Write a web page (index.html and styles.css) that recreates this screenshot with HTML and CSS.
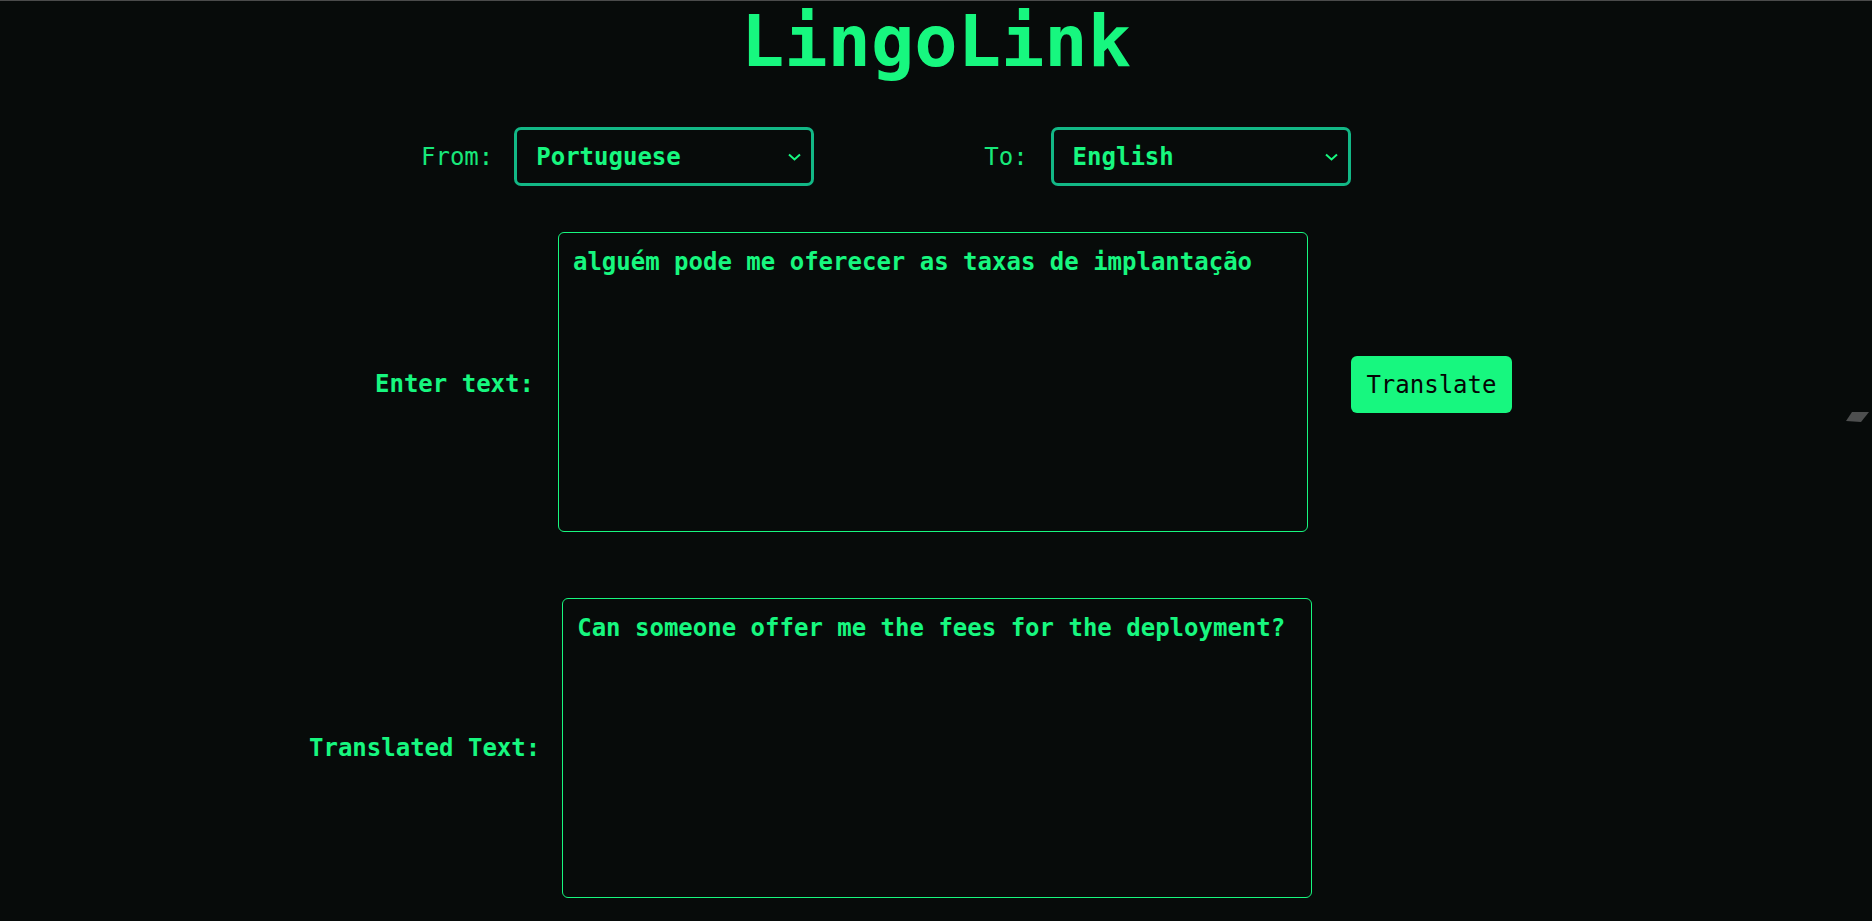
FILE: index.html
```html
<!DOCTYPE html>
<html lang="en">
<head>
<meta charset="utf-8">
<title>LingoLink</title>
<link rel="stylesheet" href="styles.css">
</head>
<body>
<main class="app">
  <h1 class="title">LingoLink</h1>
  <div class="lang-row">
    <label class="lang-label from-label" for="from">From:</label>
    <select id="from" class="lang-select">
      <option>Portuguese</option>
      <option>English</option>
    </select>
    <label class="lang-label to-label" for="to">To:</label>
    <select id="to" class="lang-select">
      <option>English</option>
      <option>Portuguese</option>
    </select>
  </div>
  <div class="text-row input-row">
    <label class="text-label in-label" for="src">Enter text:</label>
    <textarea id="src" class="text-box">alguém pode me oferecer as taxas de implantação</textarea>
    <button class="translate-btn">Translate</button>
  </div>
  <div class="text-row output-row">
    <label class="text-label out-label" for="dst">Translated Text:</label>
    <textarea id="dst" class="text-box" readonly>Can someone offer me the fees for the deployment?</textarea>
  </div>
</main>
<svg class="corner-mark" width="24" height="12" viewBox="0 0 24 12"><polygon points="6,1 23,1 15,11 0,10" fill="#4d4f4f"/></svg>
</body>
</html>
```

FILE: styles.css
```css
html, body {
  margin: 0;
  padding: 0;
  background: #070b0a;
}

body {
  border-top: 1px solid #4a4b4b;
  min-height: 920px;
  font-family: "DejaVu Sans Mono", "Liberation Mono", monospace;
  color: #17f77f;
  position: relative;
  overflow: hidden;
}

.app {
  display: flex;
  flex-direction: column;
}

.title {
  margin: 0;
  padding-top: 4px;
  font-size: 72px;
  line-height: 72px;
  font-weight: bold;
  text-align: center;
  color: #17f77f;
}

.lang-row {
  display: flex;
  align-items: center;
  margin-top: 50px;
  padding-left: 421px;
}

.lang-label {
  font-size: 24px;
  font-weight: normal;
  color: #17e87a;
}

.from-label {
  margin-right: 21px;
}

.to-label {
  margin-left: 170px;
  margin-right: 23px;
}

.lang-select {
  appearance: none;
  -webkit-appearance: none;
  box-sizing: border-box;
  width: 300px;
  height: 59px;
  padding: 0 40px 0 19px;
  background-color: #070b0a;
  background-image: url("data:image/svg+xml,%3Csvg xmlns='http://www.w3.org/2000/svg' width='13' height='8' viewBox='0 0 13 8'%3E%3Cpath d='M1 1.5 L6.5 6.5 L12 1.5' fill='none' stroke='%2317f77f' stroke-width='2'/%3E%3C/svg%3E");
  background-repeat: no-repeat;
  background-position: right 10px center;
  border: 3px solid #12b886;
  border-radius: 7px;
  color: #17f77f;
  font-family: "DejaVu Sans Mono", "Liberation Mono", monospace;
  font-size: 24px;
  font-weight: bold;
  outline: none;
}

.text-row {
  display: flex;
  align-items: center;
}

.input-row {
  margin-top: 46px;
  padding-left: 375px;
}

.output-row {
  margin-top: 66px;
  padding-left: 309px;
}

.text-label {
  font-size: 24px;
  font-weight: bold;
  color: #17f77f;
}

.in-label {
  margin-right: 24px;
  margin-top: 4px;
}

.out-label {
  margin-right: 22px;
}

.text-box {
  box-sizing: border-box;
  width: 750px;
  height: 300px;
  padding: 15px 14px;
  background: #070b0a;
  border: 1px solid #17f77f;
  border-radius: 6px;
  color: #17f77f;
  font-family: "DejaVu Sans Mono", "Liberation Mono", monospace;
  font-size: 24px;
  font-weight: bold;
  line-height: 28px;
  resize: none;
  outline: none;
}

.translate-btn {
  box-sizing: border-box;
  width: 161px;
  height: 57px;
  margin-left: 43px;
  margin-top: 5px;
  background: #17f77f;
  color: #050505;
  border: none;
  border-radius: 6px;
  font-family: "DejaVu Sans Mono", "Liberation Mono", monospace;
  font-size: 24px;
  font-weight: normal;
  padding: 0;
  cursor: pointer;
}

.corner-mark {
  position: absolute;
  left: 1846px;
  top: 410px;
}
```
